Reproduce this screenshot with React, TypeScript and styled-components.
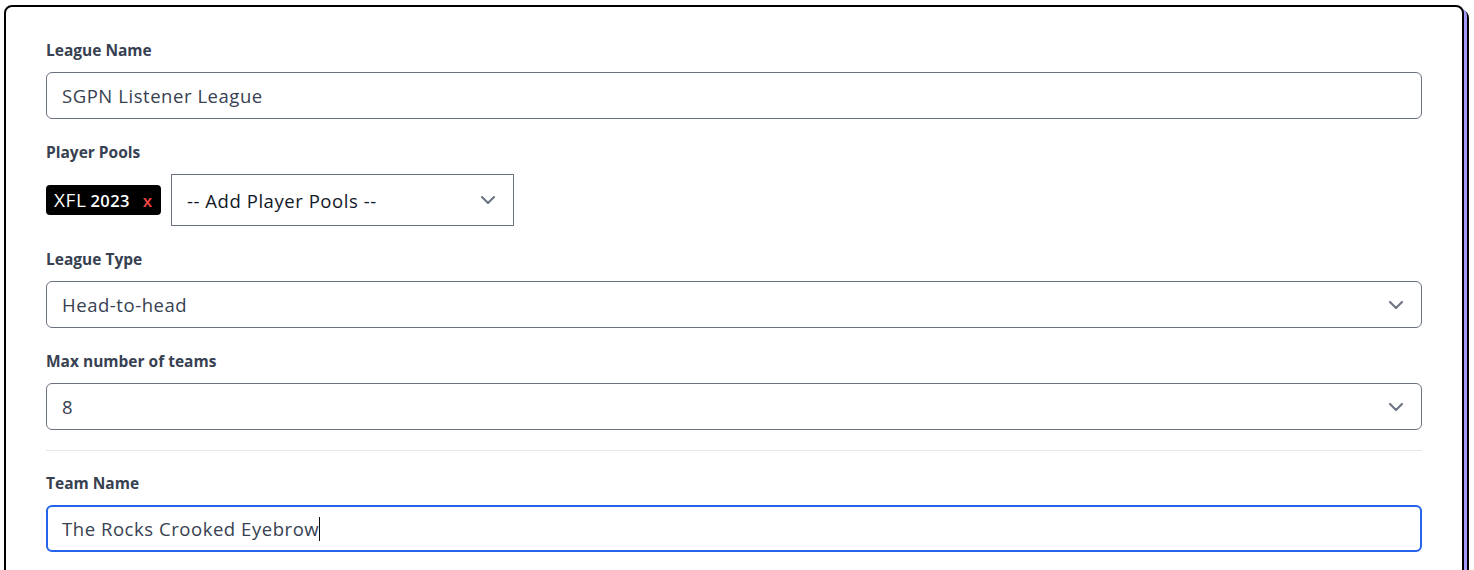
import React from "react";
import styled, { createGlobalStyle } from "styled-components";

const Global = createGlobalStyle`
  html, body { margin: 0; padding: 0; background: #fff; }
  body { font-family: "Open Sans", "Noto Sans", sans-serif; color: #374151; overflow: hidden; }
  * { box-sizing: border-box; }
`;

const Page = styled.div`
  padding: 5px 0 0 4px;
`;

const Card = styled.div`
  width: 1460px;
  min-height: 620px;
  border: 2px solid #000;
  border-radius: 8px;
  background: #fff;
  box-shadow: 3px 3px 0 0 #a29bf7, 5px 5px 0 0 #000;
  padding: 32px 40px 40px 40px;
`;

const Group = styled.div`
  margin-bottom: 22px;
`;

const Label = styled.label`
  display: block;
  font-size: 15.5px;
  line-height: 20px;
  font-weight: 700;
  color: #374151;
  padding-top: 1px;
  margin-bottom: 12px;
`;

const fieldText = `
  font-size: 18.5px;
  letter-spacing: 0.55px;
  color: #374151;
`;

const TextInput = styled.input`
  display: block;
  width: 100%;
  height: 47px;
  font-family: inherit;
  ${fieldText}
  background: #fff;
  border: 1px solid #6b7280;
  padding: 0 15px 0 15px;
  border-radius: 6px;
  outline: none;
`;

const FocusedField = styled.div`
  display: flex;
  align-items: center;
  width: 100%;
  height: 47px;
  ${fieldText}
  background: #fff;
  border: 2px solid #2563eb;
  padding: 0 14px;
  border-radius: 6px;
`;

const Caret = styled.span`
  display: inline-block;
  width: 1px;
  height: 24px;
  background: #111;
`;

const SelectWrap = styled.div<{ $square?: boolean; $width?: string }>`
  position: relative;
  width: ${(p) => p.$width || "100%"};
  height: ${(p) => (p.$square ? "52px" : "47px")};
  border: 1px solid #6b7280;
  border-radius: ${(p) => (p.$square ? "0" : "6px")};
  display: flex;
  align-items: center;
  padding-left: 15px;
  ${fieldText}
  color: ${(p) => (p.$square ? "#111827" : "#374151")};
  background: #fff;
`;

const Chevron = styled.svg<{ $right: number }>`
  position: absolute;
  right: ${(p) => p.$right}px;
  top: 50%;
  margin-top: -4px;
`;

const PoolRow = styled.div`
  display: flex;
  align-items: center;
  gap: 10px;
`;

const Tag = styled.span`
  display: inline-flex;
  height: 30px;
  width: 115px;
  padding: 0 8px;
  align-items: center;
  background: #000;
  color: #fff;
  border-radius: 4px;
  gap: 4px;
`;

const TagMain = styled.span`
  font-size: 19px;
  font-weight: 500;
  letter-spacing: 0.6px;
`;

const TagSub = styled.span`
  font-size: 16.5px;
  font-weight: 600;
  letter-spacing: 0.4px;
`;

const TagX = styled.span`
  color: #ef4444;
  font-size: 17px;
  margin-left: 9px;
  font-weight: 600;
`;

const Divider = styled.hr`
  border: none;
  border-top: 1px solid #e5e7eb;
  margin: -2px 0 21px 0;
`;

const ChevronIcon: React.FC<{ right: number }> = ({ right }) => (
  <Chevron $right={right} width="14" height="8" viewBox="0 0 14 8" fill="none">
    <polyline points="1,1 7,7 13,1" stroke="#6b7280" strokeWidth="2" strokeLinecap="round" strokeLinejoin="round" />
  </Chevron>
);

export default function App() {
  return (
    <>
      <Global />
      <Page>
        <Card>
          <Group>
            <Label>League Name</Label>
            <TextInput defaultValue="SGPN Listener League" />
          </Group>
          <Group>
            <Label>Player Pools</Label>
            <PoolRow>
              <Tag>
                <TagMain>XFL</TagMain>
                <TagSub>2023</TagSub>
                <TagX>x</TagX>
              </Tag>
              <SelectWrap $square $width="343px">
                -- Add Player Pools --
                <ChevronIcon right={18} />
              </SelectWrap>
            </PoolRow>
          </Group>
          <Group>
            <Label>League Type</Label>
            <SelectWrap>
              Head-to-head
              <ChevronIcon right={18} />
            </SelectWrap>
          </Group>
          <Group>
            <Label>Max number of teams</Label>
            <SelectWrap>
              8
              <ChevronIcon right={18} />
            </SelectWrap>
          </Group>
          <Divider />
          <Group>
            <Label>Team Name</Label>
            <FocusedField>
              The Rocks Crooked Eyebrow
              <Caret />
            </FocusedField>
          </Group>
        </Card>
      </Page>
    </>
  );
}
